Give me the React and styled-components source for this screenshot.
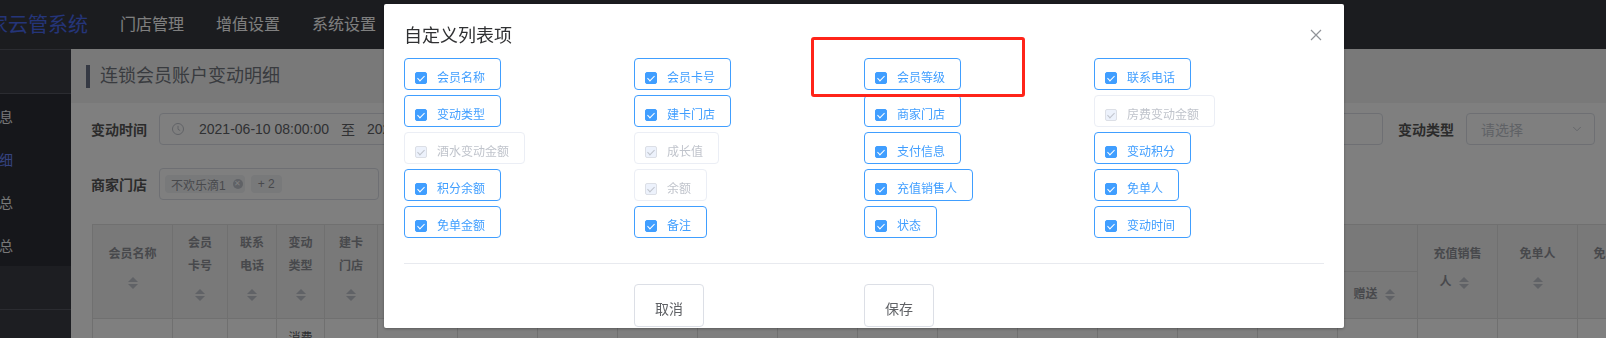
import React from "react";
import styled, { createGlobalStyle } from "styled-components";
import { ChevronDown } from "lucide-react";

const GlobalStyle = createGlobalStyle`
  html, body {
    margin: 0;
    padding: 0;
  }
  body {
    width: 1606px;
    height: 338px;
    overflow: hidden;
    background: #fff;
    font-family: "Liberation Sans", "Noto Sans CJK SC", sans-serif;
  }
  * {
    box-sizing: border-box;
  }
`;

/* 页面框架 */
const Page = styled.div`
  display: grid;
  grid-template-columns: 71px 1fr;
  grid-template-rows: 49px 1fr;
  width: 1606px;
  height: 338px;
  overflow: hidden;
`;

const Header = styled.div`
  grid-column: 1 / 3;
  display: flex;
  align-items: center;
  background: #36383f;
`;

const Logo = styled.div`
  display: flex;
  justify-content: flex-end;
  width: 88px;
  overflow: hidden;
  font-size: 20px;
  line-height: 26px;
  color: #4a6af2;
  white-space: nowrap;
`;

const Nav = styled.div`
  display: flex;
  gap: 32px;
  margin-left: 32px;
`;

const NavItem = styled.span`
  font-size: 16px;
  line-height: 22px;
  color: #fff;
`;

const Side = styled.div`
  display: flex;
  flex-direction: column;
  background: #3a3c45;
  border-top: 1px solid #575963;
`;

const SideBlock = styled.div`
  height: 44px;
  border-bottom: 1px solid #575963;
`;

const Menu = styled.div`
  background: #2c2e36;
`;

const MenuItem = styled.div`
  display: flex;
  justify-content: flex-end;
  align-items: center;
  height: 43px;
  padding-right: 58px;
  overflow: hidden;
  white-space: nowrap;
  font-size: 14px;
  color: ${(p) => (p.$active ? "#6a86ff" : "#f0f0f0")};
`;

const Main = styled.div`
  min-width: 0;
  overflow: hidden;
  background: #fff;
`;

const TitleBar = styled.div`
  display: flex;
  align-items: center;
  gap: 10px;
  height: 54px;
  padding-left: 15px;
  background: #f3f3f3;
`;

const TitleMark = styled.span`
  width: 4px;
  height: 23px;
  background: #6b7386;
`;

const TitleText = styled.span`
  font-size: 18px;
  line-height: 24px;
  color: #72777f;
`;

const Filters = styled.div`
  display: flex;
  flex-direction: column;
  gap: 23px;
  padding: 10px 20px 0;
`;

const FilterRow = styled.div`
  display: flex;
  align-items: center;
  height: 32px;
  white-space: nowrap;
`;

const FormItem = styled.div`
  display: flex;
  align-items: center;
  flex: none;
  margin-right: 15px;
`;

const Label = styled.span`
  width: 68px;
  font-size: 14px;
  font-weight: bold;
  color: #575757;
`;

const InputBox = styled.div`
  display: flex;
  align-items: center;
  width: ${(p) => p.$w}px;
  height: 32px;
  padding: 0 ${(p) => (p.$pad ? p.$pad : 12)}px;
  border: 1px solid #dcdfe6;
  border-radius: 4px;
  font-size: 14px;
  color: #606266;
`;

const DateText = styled.span`
  margin-left: 15px;
`;

const Sep = styled.span`
  margin: 0 12px;
`;

const Placeholder = styled.span`
  flex: 1;
  color: #c0c4cc;
`;

const Tag = styled.span`
  display: inline-flex;
  align-items: center;
  gap: 7px;
  height: 18px;
  margin-right: 6px;
  padding: ${(p) => (p.$closable ? "0 2px 0 6px" : "0 7px")};
  border-radius: 4px;
  background: #f0f2f5;
  font-size: 12px;
  color: #909399;
`;

const TagClose = styled.span`
  display: flex;
  align-items: center;
  justify-content: center;
  width: 10px;
  height: 10px;
  border-radius: 50%;
  background: #c0c4cc;
  color: #fff;
  font-size: 8px;
  line-height: 1;
`;

/* 表格 */
const TableWrap = styled.div`
  margin: 24px 0 0 21px;
`;

const Table = styled.table`
  width: ${(p) => p.$w}px;
  border-collapse: collapse;
  table-layout: fixed;
`;

const Th = styled.th`
  height: 47px;
  padding: 0 11px;
  border: 1px solid #e0e0e0;
  background: #f2f2f2;
  font-size: 12px;
  font-weight: bold;
  line-height: 23px;
  color: #909399;
  text-align: center;
  vertical-align: middle;
`;

const Td = styled.td`
  height: 60px;
  padding: 8px 11px;
  border: 1px solid #e0e0e0;
  font-size: 12px;
  line-height: 23px;
  color: #606266;
  text-align: center;
  vertical-align: top;
`;

const SortCaret = styled.span`
  display: inline-flex;
  flex-direction: column;
  align-items: center;
  justify-content: center;
  gap: 2px;
  width: 24px;
  height: 34px;
  vertical-align: middle;

  &::before,
  &::after {
    content: "";
    border: 5px solid transparent;
  }
  &::before {
    border-top: 0;
    border-bottom-color: #c0c4cc;
  }
  &::after {
    border-bottom: 0;
    border-top-color: #c0c4cc;
  }
`;

/* 遮罩和弹窗 */
const Mask = styled.div`
  position: fixed;
  inset: 0;
  background: rgba(0, 0, 0, 0.5);
`;

const Dialog = styled.div`
  position: fixed;
  left: 384px;
  top: 4px;
  width: 960px;
  padding-bottom: 1px;
  background: #fff;
  border-radius: 2px;
  box-shadow: 0 1px 3px rgba(0, 0, 0, 0.3);
`;

const DialogHead = styled.div`
  display: flex;
  justify-content: space-between;
  align-items: center;
  padding: 20px 20px 10px;
`;

const DialogTitle = styled.span`
  font-size: 18px;
  line-height: 24px;
  color: #303133;
`;

const CloseBtn = styled.span`
  display: flex;
  align-items: center;
  justify-content: center;
  width: 16px;
  height: 16px;
  margin-top: -2px;
`;

const CheckGrid = styled.div`
  display: grid;
  grid-template-columns: repeat(4, 1fr);
  row-gap: 5px;
  justify-items: start;
  padding: 0 20px 25px;
`;

const CheckItem = styled.label`
  display: inline-flex;
  align-items: center;
  height: 32px;
  padding: 7px 15px 0 10px;
  border: 1px solid ${(p) => (p.$disabled ? "#ebeef5" : "#409eff")};
  border-radius: 4px;
  font-size: 12px;
  line-height: 14px;
  color: ${(p) => (p.$disabled ? "#c0c4cc" : "#409eff")};
  white-space: nowrap;
`;

const CheckBox = styled.span`
  position: relative;
  width: 12px;
  height: 12px;
  border-radius: 2px;
  border: 1px solid ${(p) => (p.$disabled ? "#dcdfe6" : "#409eff")};
  background: ${(p) => (p.$disabled ? "#edf2fc" : "#409eff")};

  &::after {
    content: "";
    position: absolute;
    left: 3px;
    top: 1px;
    width: 3px;
    height: 6px;
    border: 1px solid ${(p) => (p.$disabled ? "#c0c4cc" : "#fff")};
    border-left: 0;
    border-top: 0;
    transform: rotate(45deg);
  }
`;

const CheckText = styled.span`
  padding-left: 10px;
`;

const Divider = styled.div`
  margin: 0 20px;
  border-top: 1px solid #e8eaef;
`;

const Footer = styled.div`
  display: grid;
  grid-template-columns: repeat(4, 1fr);
  padding: 20px 20px 0;
`;

const Button = styled.button`
  grid-column: ${(p) => p.$col};
  width: 70px;
  height: 43px;
  padding: 4px 0 0;
  border: 1px solid #dcdfe6;
  border-radius: 4px;
  background: #fff;
  font-family: inherit;
  font-size: 14px;
  color: #606266;
`;

const Mark = styled.div`
  position: absolute;
  left: 427px;
  top: 33px;
  width: 214px;
  height: 60px;
  border: 3px solid #ff2419;
  border-radius: 3px;
`;

const columns = [
  { name: "会员名称", w: 80 },
  { name: "会员卡号", w: 55 },
  { name: "联系电话", w: 49 },
  { name: "变动类型", w: 48 },
  { name: "建卡门店", w: 53 },
  { name: "会员等级", w: 80 },
  { name: "商家门店", w: 80 },
  { name: "房费变动金额", w: 80 },
  { name: "酒水变动金额", w: 80 },
  { name: "成长值", w: 80 },
  { name: "支付信息", w: 80 },
  { name: "变动积分", w: 80 },
  { name: "积分余额", w: 80 },
  { name: "余额", w: 80 },
  { name: "变动时间", w: 80 },
];

const groupColumns = [
  { name: "合计", w: 80 },
  { name: "本金", w: 80 },
  { name: "赠送", w: 80 },
];

const tailColumns = [
  { name: "充值销售人", w: 80 },
  { name: "免单人", w: 80 },
  { name: "免单金额", w: 80 },
];

const allColumns = [...columns, ...groupColumns, ...tailColumns];
const tableWidth = allColumns.reduce((sum, c) => sum + c.w, 0);

const options = [
  { label: "会员名称" },
  { label: "会员卡号" },
  { label: "会员等级" },
  { label: "联系电话" },
  { label: "变动类型" },
  { label: "建卡门店" },
  { label: "商家门店" },
  { label: "房费变动金额", disabled: true },
  { label: "酒水变动金额", disabled: true },
  { label: "成长值", disabled: true },
  { label: "支付信息" },
  { label: "变动积分" },
  { label: "积分余额" },
  { label: "余额", disabled: true },
  { label: "充值销售人" },
  { label: "免单人" },
  { label: "免单金额" },
  { label: "备注" },
  { label: "状态" },
  { label: "变动时间" },
];

const ClockIcon = () => (
  <svg width="12" height="12" viewBox="0 0 12 12" fill="none" stroke="#c0c4cc" strokeWidth="1">
    <circle cx="6" cy="6" r="5.5" />
    <path d="M6 2.8V6.3L8.2 7.6" />
  </svg>
);

const CloseIcon = () => (
  <svg width="12" height="12" viewBox="0 0 12 12" stroke="#909399" strokeWidth="1.2">
    <path d="M1 1L11 11M11 1L1 11" />
  </svg>
);

const HeadCell = ({ name, ...rest }) => (
  <Th {...rest}>
    {name}
    <SortCaret />
  </Th>
);

const App = function App() {
  return (
    <>
      <GlobalStyle />
      <Page>
        <Header>
          <Logo>商家云管系统</Logo>
          <Nav>
            <NavItem>门店管理</NavItem>
            <NavItem>增值设置</NavItem>
            <NavItem>系统设置</NavItem>
          </Nav>
        </Header>
        <Side>
          <SideBlock />
          <Menu>
            <MenuItem>会员信息</MenuItem>
            <MenuItem $active>账户变动明细</MenuItem>
            <MenuItem>充值汇总</MenuItem>
            <MenuItem>消费汇总</MenuItem>
          </Menu>
          <SideBlock />
        </Side>
        <Main>
          <TitleBar>
            <TitleMark />
            <TitleText>连锁会员账户变动明细</TitleText>
          </TitleBar>
          <Filters>
            <FilterRow>
              <FormItem>
                <Label>变动时间</Label>
                <InputBox $w={380}>
                  <ClockIcon />
                  <DateText>2021-06-10 08:00:00</DateText>
                  <Sep>至</Sep>
                  <span>2021-06-11 08:00:00</span>
                </InputBox>
              </FormItem>
              <FormItem>
                <Label>会员名称</Label>
                <InputBox $w={200} />
              </FormItem>
              <FormItem>
                <Label>会员卡号</Label>
                <InputBox $w={200} />
              </FormItem>
              <FormItem>
                <Label>联系电话</Label>
                <InputBox $w={195} />
              </FormItem>
              <FormItem>
                <Label>变动类型</Label>
                <InputBox $w={129} $pad={10}>
                  <Placeholder>&nbsp;请选择</Placeholder>
                  <ChevronDown size={14} color="#c0c4cc" strokeWidth={1.5} />
                </InputBox>
              </FormItem>
            </FilterRow>
            <FilterRow>
              <FormItem>
                <Label>商家门店</Label>
                <InputBox $w={220} $pad={5}>
                  <Tag $closable>
                    不欢乐滴1
                    <TagClose>✕</TagClose>
                  </Tag>
                  <Tag>+ 2</Tag>
                </InputBox>
              </FormItem>
            </FilterRow>
          </Filters>
          <TableWrap>
            <Table $w={tableWidth}>
              <colgroup>
                {allColumns.map((c) => (
                  <col key={c.name} style={{ width: c.w }} />
                ))}
              </colgroup>
              <thead>
                <tr>
                  {columns.map((c) => (
                    <HeadCell key={c.name} name={c.name} rowSpan={2} />
                  ))}
                  <Th colSpan={groupColumns.length}>充值金额</Th>
                  {tailColumns.map((c) => (
                    <HeadCell key={c.name} name={c.name} rowSpan={2} />
                  ))}
                </tr>
                <tr>
                  {groupColumns.map((c) => (
                    <HeadCell key={c.name} name={c.name} />
                  ))}
                </tr>
              </thead>
              <tbody>
                <tr>
                  {allColumns.map((c) => (
                    <Td key={c.name}>{c.name === "变动类型" ? "消费充值" : ""}</Td>
                  ))}
                </tr>
              </tbody>
            </Table>
          </TableWrap>
        </Main>
      </Page>
      <Mask />
      <Dialog>
        <DialogHead>
          <DialogTitle>自定义列表项</DialogTitle>
          <CloseBtn>
            <CloseIcon />
          </CloseBtn>
        </DialogHead>
        <CheckGrid>
          {options.map((o) => (
            <CheckItem key={o.label} $disabled={o.disabled}>
              <CheckBox $disabled={o.disabled} />
              <CheckText>{o.label}</CheckText>
            </CheckItem>
          ))}
        </CheckGrid>
        <Divider />
        <Footer>
          <Button $col={2}>取消</Button>
          <Button $col={3}>保存</Button>
        </Footer>
        <Mark />
      </Dialog>
    </>
  );
};

export default App;
